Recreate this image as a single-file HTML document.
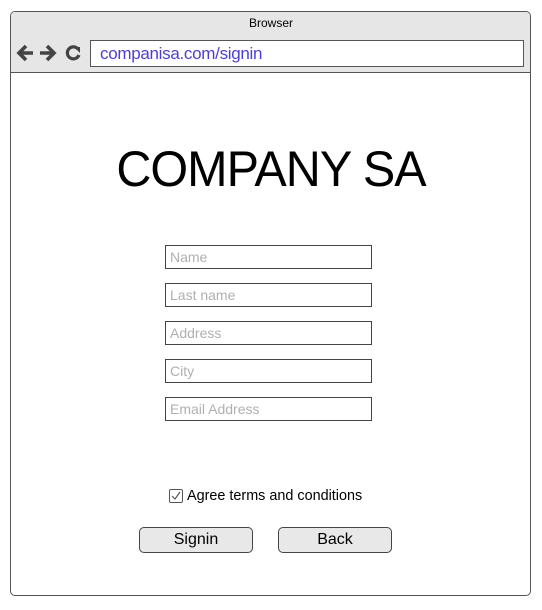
<!DOCTYPE html>
<html><head><style>
body{margin:0;width:542px;height:610px;background:#fff;font-family:"Liberation Sans",Arial,sans-serif;position:relative;overflow:hidden}
.a{position:absolute;box-sizing:border-box}
.frame{left:10px;top:11px;width:521px;height:585px;border:1px solid #555;border-radius:5px;overflow:hidden}
.hdr{left:0;top:0;width:519px;height:61px;background:#e6e6e6;border-bottom:1px solid #555}
.in{left:165px;width:207px;height:24px;border:1.5px solid #444;font-size:14px;color:#b0b0b0;padding:3px 0 0 4px}
.btn{top:527px;width:114px;height:26px;border:1px solid #444;border-radius:5px;background:#e8e8e8;font-size:16px;text-align:center;line-height:24px}
</style></head><body>
<div class="a frame"><div class="a hdr"></div></div>
<div class="a" style="left:0;top:16px;width:542px;text-align:center;font-size:12px">Browser</div>
<svg class="a" style="left:16px;top:43px" width="70" height="20" viewBox="0 0 70 20">
<path d="M17 10H4M10 3L3 10l7 7" stroke="#444" stroke-width="3.6" fill="none"/>
<path d="M24 10h13M31 3l7 7-7 7" stroke="#444" stroke-width="3.6" fill="none"/>
<path d="M62 6A6 6 0 1 0 63 12" stroke="#444" stroke-width="3.2" fill="none"/>
<path d="M58 4l6 0 0 6z" fill="#444"/>
</svg>
<div class="a" style="left:90px;top:40px;width:434px;height:27px;background:#fff;border:1px solid #555;font-size:17px;color:#4c3fd8;padding:3px 0 0 9px;letter-spacing:-0.3px">companisa.com/signin</div>
<div class="a" style="left:0;top:140px;width:542px;text-align:center;font-size:50px;letter-spacing:-1px;transform:scaleX(0.97)">COMPANY SA</div>
<div class="a in" style="top:245px">Name</div>
<div class="a in" style="top:283px">Last name</div>
<div class="a in" style="top:321px">Address</div>
<div class="a in" style="top:359px">City</div>
<div class="a in" style="top:397px">Email Address</div>
<div class="a" style="left:169px;top:489px;width:14px;height:14px;border:1px solid #555;border-radius:2px"></div>
<svg class="a" style="left:170px;top:490px" width="12" height="12"><path d="M2 6l3 3 5-7" stroke="#555" stroke-width="1.2" fill="none"/></svg>
<div class="a" style="left:187px;top:488px;font-size:14.4px">Agree terms and conditions</div>
<div class="a btn" style="left:139px">Signin</div>
<div class="a btn" style="left:278px">Back</div>
</body></html>
